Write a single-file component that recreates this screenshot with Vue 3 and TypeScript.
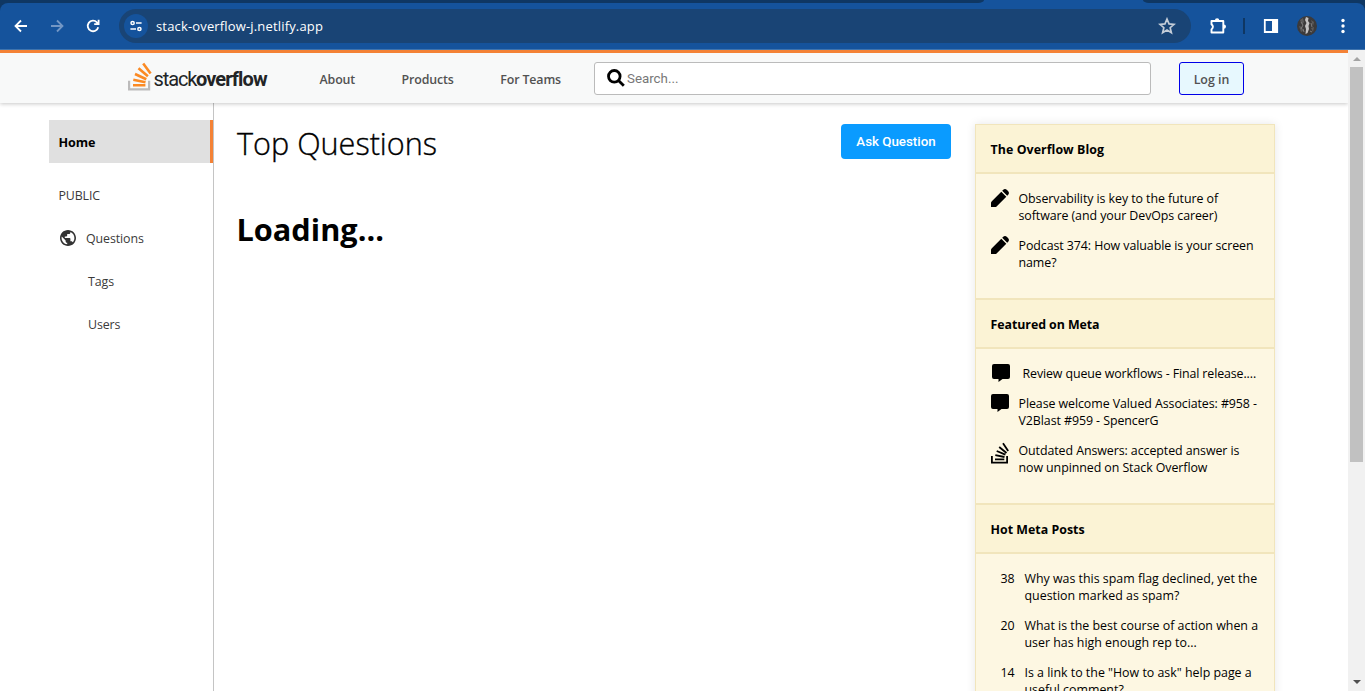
<script setup lang="ts">
interface Item { lead?: string; icon?: string; indent?: boolean; lines: string[] }
interface Section { title: string; kind: string; items: Item[] }

const nav: string[] = ['About', 'Products', 'For Teams']
const sections: Section[] = [
  {
    title: 'The Overflow Blog', kind: 'blog',
    items: [
      { icon: 'pen', lines: ['Observability is key to the future of', 'software (and your DevOps career)'] },
      { icon: 'pen', lines: ['Podcast 374: How valuable is your screen', 'name?'] },
    ],
  },
  {
    title: 'Featured on Meta', kind: 'meta',
    items: [
      { icon: 'msg', indent: true, lines: ['Review queue workflows - Final release....'] },
      { icon: 'msg', lines: ['Please welcome Valued Associates: #958 -', 'V2Blast #959 - SpencerG'] },
      { icon: 'stack', lines: ['Outdated Answers: accepted answer is', 'now unpinned on Stack Overflow'] },
    ],
  },
  {
    title: 'Hot Meta Posts', kind: 'hot',
    items: [
      { lead: '38', lines: ['Why was this spam flag declined, yet the', 'question marked as spam?'] },
      { lead: '20', lines: ['What is the best course of action when a', 'user has high enough rep to...'] },
      { lead: '14', lines: ['Is a link to the "How to ask" help page a', 'useful comment?'] },
    ],
  },
]
</script>

<template>
  <div class="window">
    <div class="tabstrip"><i class="tabs"></i><i class="gap"></i><i class="rest"></i></div>
    <div class="toolbar">
      <svg class="tool back" viewBox="0 0 16 16"><path d="M14 8H3M8 2.5 2.5 8 8 13.5" /></svg>
      <svg class="tool forward" viewBox="0 0 16 16"><path d="M2 8h11M8 2.5 13.5 8 8 13.5" /></svg>
      <svg class="tool reload" viewBox="0 0 16 16"><path d="M13.2 9.2A5.3 5.3 0 1 1 11.9 4.3L13.4 5.8M13.6 1.8V6.2H9.2" /></svg>
      <div class="address">
        <span class="site">
          <svg viewBox="0 0 14 14"><circle cx="3.6" cy="4" r="1.6" /><path d="M7 4h5.6M1.4 10H7" /><circle cx="10.4" cy="10" r="1.6" /></svg>
        </span>
        <span class="url">stack-overflow-j.netlify.app</span>
        <svg class="star" viewBox="0 0 16 16"><path d="M8 1.8 9.8 6.1l4.5.4-3.5 3 1.1 4.5L8 11.6l-3.9 2.4L5.2 9.5 1.7 6.5 6.2 6.1Z" /></svg>
      </div>
      <svg class="puzzle" viewBox="0 0 18 18"><path class="body" d="M2.5 4H14.3V15.5H2.5V12.4Q5.3 9.8 2.5 7.2Z" /><path class="fill" d="M5.9 3.5a2.2 2.2 0 0 1 4.400 0zM14.8 7.4a2.2 2.2 0 0 1 0 4.400z" /></svg>
      <i class="divider"></i>
      <svg class="panel" viewBox="0 0 16 16"><path class="frame" d="M1.8 2h12.4v12H1.8z" /><path class="fill" d="M9 1h6v14H9z" /></svg>
      <svg class="avatar" viewBox="0 0 20 20">
        <circle cx="10" cy="10" r="10" fill="#3c3a3a" />
        <path d="M3 4 6 2l1 4-2 3zM2 10l3 1 1 4-2 1zM14 4l3 2-1 4zM14 12l3-1-1 5z" fill="#5c5a5a" />
        <path d="M9 1 11.5 2 11 5l1.5 2-1 3 .5 3-1.5 4-2 1 .5-5-1-3 1.500-3-1.500-3z" fill="#c4c2c2" />
        <path d="M4 6 6 9l-2 4M14 7l1 4M13 15l2 1M6 13l1 3" stroke="#7e7c7c" fill="none" />
      </svg>
      <svg class="dots" viewBox="0 0 4 16"><circle cx="2" cy="2.5" r="1.7" /><circle cx="2" cy="8" r="1.7" /><circle cx="2" cy="13.5" r="1.7" /></svg>
    </div>

    <div class="viewport">
      <div class="page">
        <header class="header">
          <div class="logo">
            <svg class="mark" viewBox="0 0 24 29">
              <path d="M1.1 18.8v8.6h20v-8.6" fill="none" stroke="#bcbbbb" stroke-width="2.2" />
              <path d="M5 23.3h12.400M5.3 17.8l12.2 2.5M7 12l11.3 5.3M10.5 6.3l9.4 8M15.2 1.5l7.4 10" fill="none" stroke="#fb8a24" stroke-width="2.6" />
            </svg>
            <span class="stack">stack</span><span class="overflow">overflow</span>
          </div>
          <nav class="nav"><a v-for="n in nav" :key="n">{{ n }}</a></nav>
          <div class="search">
            <svg viewBox="0 0 18 18"><circle cx="7.3" cy="7.3" r="5.8" /><path d="m11.5 11.5 5.3 5.3" /></svg>
            <span>Search...</span>
          </div>
          <button class="login">Log in</button>
        </header>

        <div class="content">
          <aside class="side">
            <div class="home"><span>Home</span></div>
            <div class="row public"><span>PUBLIC</span></div>
            <div class="row questions">
              <svg viewBox="2 2 20 20"><path d="M12 2C6.48 2 2 6.48 2 12s4.48 10 10 10 10-4.48 10-10S17.52 2 12 2zm-1 17.93c-3.95-.49-7-3.85-7-7.93 0-.62.08-1.21.21-1.79L9 15v1c0 1.1.9 2 2 2v1.93zm6.9-2.54c-.26-.81-1-1.39-1.9-1.39h-1v-3c0-.55-.45-1-1-1H8v-2h2c.55 0 1-.45 1-1V7h2c1.1 0 2-.9 2-2v-.41c2.93 1.19 5 4.06 5 7.41 0 2.08-.8 3.97-2.1 5.39z" /></svg>
              <span>Questions</span>
            </div>
            <div class="row sub"><span>Tags</span></div>
            <div class="row sub"><span>Users</span></div>
          </aside>

          <main class="main">
            <div class="titlebar">
              <h1><span>Top Questions</span></h1>
              <button class="ask">Ask Question</button>
            </div>
            <h2><span>Loading...</span></h2>
          </main>

          <aside class="widget">
            <section v-for="s in sections" :key="s.title" :class="s.kind">
              <h3><span>{{ s.title }}</span></h3>
              <div class="list">
                <div v-for="(item, i) in s.items" :key="i" class="item" :class="{ indent: item.indent }">
                  <span v-if="item.lead" class="lead">{{ item.lead }}</span>
                  <svg v-else-if="item.icon === 'pen'" class="icon" viewBox="0 0 18 18"><path d="M0 18v-4.200Q0 13 .6 12.400L10.300 2.700l5 5L5.600 17.400Q5 18 4.200 18zM11.200 1.800 12 1Q14 -.9 16 1 L17 2Q18.900 4 17 6l-.8.8z" /></svg>
                  <svg v-else-if="item.icon === 'msg'" class="icon" viewBox="0 0 18 18"><path d="M2 0h14q2 0 2 2v11q0 2-2 2h-5.500L6.500 18v-3H2q-2 0-2-2V2Q0 0 2 0z" /></svg>
                  <svg v-else class="icon tall" viewBox="0 0 18 22"><path class="line" d="M.9 14v6.600h15.200V14M4 17.400h9.300M4.300 13.200l9.200 1.800M5.700 9l8.700 3.700M8.200 5l7.300 6M12 1.200l5.200 7.700" /></svg>
                  <p><span v-for="l in item.lines" :key="l">{{ l }}</span></p>
                </div>
              </div>
            </section>
          </aside>
        </div>
      </div>
      <div class="scrollbar"><i class="up"></i><i class="thumb"></i><i class="down"></i></div>
    </div>
  </div>
</template>

<style>
html, body { overflow: hidden; background: #fff; }
</style>

<style scoped>
* { box-sizing: border-box; }
.window { width: 1365px; height: 691px; overflow: hidden; display: flex; flex-direction: column; font: 12.4px/17px "Open Sans", "Noto Sans", sans-serif; color: #0c0d0e; }
h1, h2, h3, p { margin: 0; }
span, a { white-space: nowrap; }
svg { display: block; flex: none; }
button { font: inherit; padding: 0; }
.tabstrip { height: 11px; flex: none; background: linear-gradient(#15539c, #15539c) 978px 0 / 171px 3px no-repeat #0f3763; margin-bottom: -8px; display: flex; }
.tabs { width: 984px; height: 3px; background: #0f3763; border-bottom-right-radius: 6px 3px; }
.gap { width: 159px; height: 3px; }
.rest { flex: 1; height: 3px; background: #0f3763; border-bottom-left-radius: 6px 3px; }
.toolbar { height: 47px; flex: none; background: #15539c; border-radius: 8px 8px 0 0; border-bottom: 1px solid #3f74ae; display: flex; align-items: center; }
.tool { width: 16px; height: 16px; fill: none; stroke: #fff; stroke-width: 1.8; }
.back { margin-left: 13px; }
.forward { margin-left: 20px; stroke: #7397c5; }
.reload { margin-left: 20px; }
.address { margin-left: 18px; width: 1072px; height: 34px; border-radius: 17px; background: #194475; display: flex; align-items: center; padding-left: 5px; }
.site { width: 24px; height: 24px; border-radius: 50%; background: #15539c; display: grid; place-items: center; }
.site svg { width: 14px; height: 14px; fill: none; stroke: #fff; stroke-width: 1.5; }
.url { color: #fff; margin-left: 8px; font-size: 13px; letter-spacing: .16px; }
.star { width: 18px; height: 18px; margin-left: auto; margin-right: 15px; fill: none; stroke: #c4cdd8; stroke-width: 1.5; }
.puzzle { width: 18px; height: 18px; margin-left: 18px; }
.body { fill: none; stroke: #fff; stroke-width: 1.9; stroke-linejoin: round; }
.divider { width: 2px; height: 16px; background: #0f3763; margin-left: 16px; }
.panel { width: 16px; height: 16px; margin-left: 18px; }
.frame { fill: none; stroke: #fff; stroke-width: 1.8; }
.fill { fill: #fff; }
.avatar { width: 20px; height: 20px; margin-left: 18px; }
.dots { width: 4px; height: 16px; margin-left: 24px; fill: #fff; }
.viewport { flex: 1; min-height: 0; display: flex; }
.page { width: 1348px; overflow: hidden; display: flex; flex-direction: column; }
.header { height: 53px; flex: none; border-top: 3px solid #f48236; background: #f8f9f9; box-shadow: 0 1px 4px rgba(0,0,0,.22); display: flex; align-items: center; z-index: 1; }
.logo { margin-left: 128px; width: 141px; display: flex; align-items: center; color: #222426; font: 20px/24px Roboto, sans-serif; }
.mark { width: 24px; height: 29px; margin-top: -4px; }
.stack { margin: 2px 0 0 1.5px; width: 42.500px; letter-spacing: -1.100px; }
.overflow { margin-top: 2px; font-weight: 700; letter-spacing: -.9px; }
.nav { margin-left: 50.500px; display: flex; gap: 46.500px; color: #525252; font-weight: 600; width: 274.500px; padding-top: 2px; letter-spacing: -.13px; }
.search { width: 557px; height: 33px; border: 1px solid #bbb; border-radius: 3px; background: #fff; display: flex; align-items: center; padding-left: 12px; font: 13.33px/16px Roboto, sans-serif; color: #777; }
.search svg { width: 18px; height: 18px; margin-right: 2px; fill: none; stroke: #000; stroke-width: 2.8; }
.search span { padding-top: 1px; }
.login { width: 65px; height: 33px; margin-left: 28px; padding-top: 2px; border: 1px solid #0000e8; border-radius: 3px; background: #e7f8fe; color: #525252; font-weight: 600; }
.content { flex: 1; min-height: 0; display: flex; }
.side { width: 165px; margin-left: 49px; border-right: 1px solid #c4c4c4; padding-top: 17px; flex: none; color: #3a3a3a; letter-spacing: -.1px; }
.home { height: 43px; background: #e0e0e0; border-right: 3px solid #f48236; display: flex; align-items: center; padding: 1px 0 0 9.500px; font-weight: 700; color: #000; font-size: 12.6px; }
.row { height: 43px; display: flex; align-items: center; padding-left: 9.400px; }
.public { margin-top: 11px; }
.questions svg { width: 16px; height: 16px; margin: -1px 10px 0 1.600px; fill: #333; }
.sub { padding-left: 39px; }
.main { width: 714px; margin-left: 23px; padding-top: 21px; flex: none; }
.titlebar { display: flex; justify-content: space-between; height: 35px; }
h1 { font: 300 30.6px/38px "Open Sans", sans-serif; color: #000; -webkit-text-stroke: .35px #000; }
h2 { font: 700 30.7px/40px "Open Sans", sans-serif; color: #000; margin: 50px 0 0 -.5px; }
.ask { width: 110px; height: 35px; border: 0; border-radius: 4px; background: #0a9bff; color: #fff; font: 500 13.33px/16px Roboto, sans-serif; }
.widget { width: 300px; flex: none; margin: 21px 0 -30px 24px; border: 1px solid #f1e5bc; background: #fdf7e2; box-shadow: 0 0 9px rgba(0,0,0,.1); color: #000; letter-spacing: -.07px; }
.hot { letter-spacing: 0; }
h3 { height: 51px; margin-top: -1px; background: #fbf3d5; border: solid #f1e5bc; border-width: 2px 0; font-size: 12.4px; line-height: 17px; display: flex; align-items: center; padding: 1px 0 0 14.600px; color: #000; }
.blog h3 { height: 49px; margin-top: 0; border-top: 0; letter-spacing: .05px; padding-top: 2px; }
.list { padding: 16px 0 0 15px; height: 125px; }
.meta .list { height: 155px; }
.item { display: flex; margin-bottom: 13px; }
.item p { margin-left: 9.5px; display: flex; flex-direction: column; }
.icon { width: 18px; height: 18px; fill: #000; margin-top: -1px; }
.indent { height: 17px; letter-spacing: -.11px; }
.indent .icon { margin-left: 1px; }
.indent p { margin-left: 12.5px; }
.tall { height: 22px; margin-top: 0; margin-bottom: -5px; }
.line { fill: none; stroke: #000; stroke-width: 1.8; }
.lead { margin-left: 9.500px; width: 14.500px; }
.scrollbar { width: 17px; background: #f1f1f1; display: flex; flex-direction: column; align-items: center; }
.up, .down { border: solid transparent; border-width: 0 4px; }
.up { border-bottom: 4px solid #a3a3a3; margin-top: 7px; }
.thumb { width: 13px; height: 395px; background: #c1c1c1; margin-top: 6px; }
.down { border-top: 4px solid #505050; margin-top: auto; margin-bottom: 7px; }
</style>
